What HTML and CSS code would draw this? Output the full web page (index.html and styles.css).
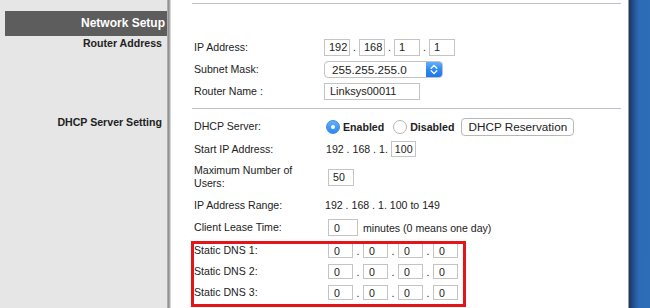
FILE: index.html
```html
<!DOCTYPE html>
<html>
<head>
<meta charset="utf-8">
<link rel="stylesheet" href="styles.css">
</head>
<body>
<div class="page">
  <aside class="side">
    <div class="side-title">Network Setup</div>
    <div class="side-item">Router Address</div>
    <div class="side-item dhcp">DHCP Server Setting</div>
  </aside>
  <div class="edge"></div>
  <main class="main">
    <section class="sec sec1">
      <div class="row">
        <span class="lbl">IP Address:</span>
        <span class="val ipv">
          <span class="box ipb">192</span><span class="dot">.</span><span class="box ipb">168</span><span class="dot">.</span><span class="box ipb">1</span><span class="dot">.</span><span class="box ipb">1</span>
        </span>
      </div>
      <div class="row">
        <span class="lbl">Subnet Mask:</span>
        <span class="val ipv">
          <span class="select"><span class="sel-text">255.255.255.0</span><span class="stepper"><svg width="8" height="11" viewBox="0 0 8 11"><path d="M1.2 4.2 L4 1.4 L6.8 4.2 M1.2 6.8 L4 9.6 L6.8 6.8" fill="none" stroke="#fff" stroke-width="1.3" stroke-linecap="round" stroke-linejoin="round"/></svg></span></span>
        </span>
      </div>
      <div class="row">
        <span class="lbl">Router Name :</span>
        <span class="val ipv"><span class="box namebox">Linksys00011</span></span>
      </div>
    </section>
    <section class="sec sec2">
      <div class="row r-dhcp">
        <span class="lbl">DHCP Server:</span>
        <span class="val v2">
          <span class="radio on"></span><span class="rlabel">Enabled</span>
          <span class="radio off"></span><span class="rlabel">Disabled</span>
          <span class="btn">DHCP Reservation</span>
        </span>
      </div>
      <div class="row">
        <span class="lbl">Start IP Address:</span>
        <span class="val v2">192 . 168 . 1.<span class="box startb">100</span></span>
      </div>
      <div class="row r-max">
        <span class="lbl">Maximum Number of<br>Users:</span>
        <span class="val v3"><span class="box maxb">50</span></span>
      </div>
      <div class="row">
        <span class="lbl">IP Address Range:</span>
        <span class="val v2b">192 . 168 . 1. 100 to 149</span>
      </div>
      <div class="row r-lease">
        <span class="lbl">Client Lease Time:</span>
        <span class="val v3"><span class="box leaseb">0</span><span class="unit">minutes (0 means one day)</span></span>
      </div>
      <div class="row r-dns first">
        <span class="lbl">Static DNS 1:</span>
        <span class="val v3">
          <span class="box dnsb">0</span><span class="dot d2">.</span><span class="box dnsb">0</span><span class="dot d2">.</span><span class="box dnsb">0</span><span class="dot d2">.</span><span class="box dnsb">0</span>
        </span>
      </div>
      <div class="row r-dns">
        <span class="lbl">Static DNS 2:</span>
        <span class="val v3">
          <span class="box dnsb">0</span><span class="dot d2">.</span><span class="box dnsb">0</span><span class="dot d2">.</span><span class="box dnsb">0</span><span class="dot d2">.</span><span class="box dnsb">0</span>
        </span>
      </div>
      <div class="row r-dns">
        <span class="lbl">Static DNS 3:</span>
        <span class="val v3">
          <span class="box dnsb">0</span><span class="dot d2">.</span><span class="box dnsb">0</span><span class="dot d2">.</span><span class="box dnsb">0</span><span class="dot d2">.</span><span class="box dnsb">0</span>
        </span>
      </div>
    </section>
  </main>
  <div class="strip"></div>
  <div class="highlight"></div>
</div>
</body>
</html>
```

FILE: styles.css
```css
* { box-sizing: border-box; }
html, body { margin: 0; padding: 0; }
body {
  font-family: "Liberation Sans", Arial, sans-serif;
  font-size: 10.6px;
  color: #222;
  background: #fff;
}
.page {
  position: relative;
  display: flex;
  width: 650px;
  height: 308px;
  overflow: hidden;
}
.side {
  width: 167px;
  flex: none;
  background: #e6e6e6;
  padding-top: 11px;
}
.side-title {
  margin-left: 5px;
  height: 25px;
  line-height: 25px;
  background: #5d5d5d;
  color: #fff;
  font-weight: bold;
  font-size: 12px;
  text-align: right;
  padding-right: 2px;
}
.side-item {
  font-weight: bold;
  text-align: right;
  padding-right: 5px;
  height: 14px;
  line-height: 14px;
  color: #222;
}
.side-item.dhcp { margin-top: 65px; }
.edge {
  width: 4px;
  flex: none;
  background: linear-gradient(to right, #b9b9b9, #8a8a8a 45%, #c9c9c9 80%, #ededed);
}
.main {
  width: 457px;
  flex: none;
  background: #fff;
  padding-top: 3px;
}
.sec {
  margin-left: 21px;
  width: 429px;
  border-top: 1px solid #bdbdd3;
}
.sec1 { padding-top: 32px; padding-bottom: 6px; }
.sec2 { padding-top: 6px; }
.row {
  display: flex;
  align-items: center;
  height: 22px;
  padding-left: 2px;
}
.lbl {
  width: 130px;
  flex: none;
  line-height: 13px;
}
.val { display: flex; align-items: center; }
.v2 { margin-left: 2px; }
.v2b { margin-left: 1px; }
.v3 { margin-left: 4px; }
.box {
  display: inline-flex;
  align-items: center;
  border: 1px solid #c4c4c4;
  background: #fff;
  padding-left: 4px;
  color: #222;
}
.ipb { width: 26px; height: 17px; padding-left: 4px; font-size: 11px; }
.dot { width: 9px; text-align: center; }
.d2 { width: 10px; }
.namebox { width: 96px; height: 17px; padding-left: 5px; font-size: 11px; }
.select {
  display: flex;
  width: 119px;
  height: 17px;
  border: 1px solid #c2c2c2;
  border-radius: 4px;
  overflow: hidden;
  background: #fff;
}
.sel-text {
  flex: 1;
  font-size: 11.7px;
  line-height: 15px;
  padding-left: 7px;
}
.stepper {
  width: 16px;
  height: 100%;
  background: linear-gradient(#62b0fb, #2d86f0 55%, #1f78ea);
  display: flex;
  align-items: center;
  justify-content: center;
}
.r-dhcp { height: 23px; }
.radio {
  width: 14px;
  height: 14px;
  border-radius: 50%;
  flex: none;
  position: relative;
}
.radio.on {
  background: linear-gradient(#5fb0fa, #2f86ee);
  border: 1px solid #3b8be6;
}
.radio.on::after {
  content: "";
  position: absolute;
  left: 4px;
  top: 4px;
  width: 4px;
  height: 4px;
  border-radius: 50%;
  background: #fff;
}
.radio.off {
  background: #fff;
  border: 1px solid #b4b4b4;
  margin-left: 9px;
}
.rlabel { font-weight: bold; margin-left: 3px; font-size: 10.6px; }
.btn {
  margin-left: 7px;
  width: 113px;
  height: 18px;
  border: 1px solid #b8b8b8;
  border-radius: 4px;
  display: flex;
  align-items: center;
  justify-content: center;
  font-size: 11.7px;
  background: #fff;
}
.startb { width: 25px; height: 16px; margin-left: 3px; padding-left: 3px; }
.r-max { height: 34px; }
.maxb { width: 26px; height: 17px; padding-left: 4px; }
.r-lease { height: 23px; }
.leaseb { width: 30px; height: 17px; padding-left: 5px; }
.unit { margin-left: 5px; }
.r-dns { height: 21px; }
.r-dns.first { margin-top: 1px; }
.dnsb { width: 25px; height: 15px; padding-left: 5px; }
.strip {
  width: 22px;
  flex: none;
  background: linear-gradient(to right, #9a9a9a 0, #9a9a9a 1px, #1d355c 1px, #21477f 4px, #2a64ab 9px, #2c6cb7 12px, #2d6db8);
}
.highlight {
  position: absolute;
  left: 191px;
  top: 241px;
  width: 275px;
  height: 66px;
  border: 3px solid #e3151b;
}
```
